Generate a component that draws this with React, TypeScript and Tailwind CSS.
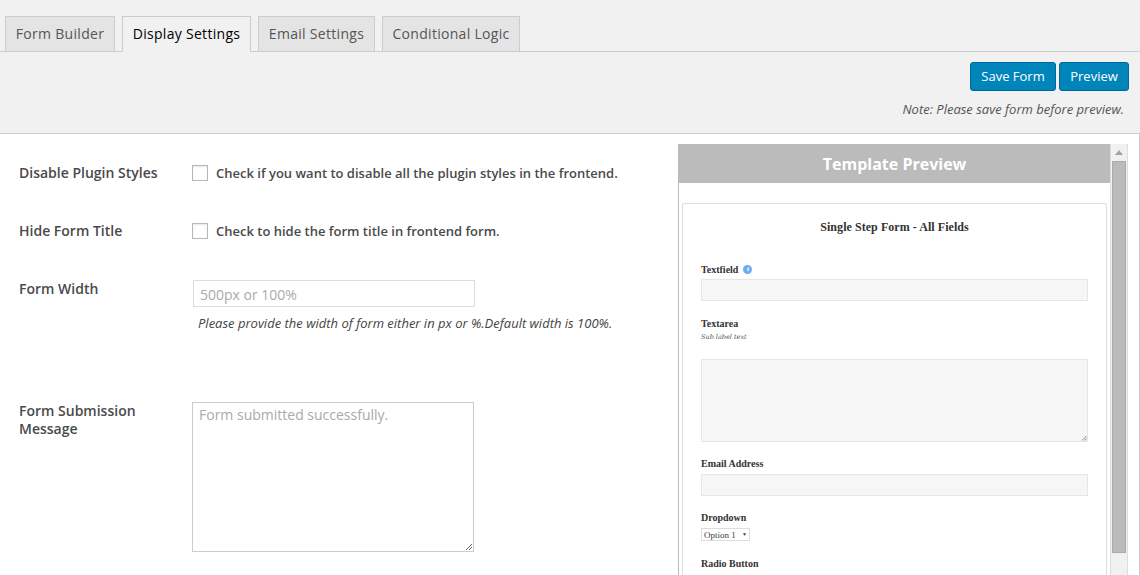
const tabs = [
  { label: 'Form Builder', width: 'w-[110px]', active: false },
  { label: 'Display Settings', width: 'w-[129px]', active: true },
  { label: 'Email Settings', width: 'w-[117px]', active: false },
  { label: 'Conditional Logic', width: 'w-[138px]', active: false },
];

function SettingRow({ label, children, className }: { label: string; children: React.ReactNode; className: string }) {
  return (
    <div className={`flex ${className}`}>
      <div className="w-[173px] shrink-0 text-[14px] leading-[18px] font-semibold text-[#4a4a4a]">{label}</div>
      <div>{children}</div>
    </div>
  );
}

function CheckRow({ label, text, className }: { label: string; text: string; className: string }) {
  return (
    <SettingRow label={label} className={className}>
      <div className="flex items-center h-[18px]">
        <span className="block w-4 h-4 border border-[#b4b9be] bg-white shadow-[inset_0_1px_2px_rgba(0,0,0,0.1)]" />
        <span className="ml-2 pt-px text-[13px] font-semibold text-[#4a4a4a]">{text}</span>
      </div>
    </SettingRow>
  );
}

function PreviewField({ label, className }: { label: string; className: string }) {
  return (
    <div className={className}>
      <div className="text-[10px] leading-[12px] font-bold text-[#333]">{label}</div>
    </div>
  );
}

export default function App() {
  return (
    <div className="w-[1140px] h-[575px] overflow-hidden bg-white font-['Open_Sans',sans-serif]">
      {/* Tabs and actions */}
      <div className="h-[134px] bg-[#f1f1f1] border-b border-[#ccc]">
        <div className="h-[52px] pt-4 pl-[5px] flex gap-[7px] border-b border-[#ccc]">
          {tabs.map((tab) => (
            <div
              key={tab.label}
              className={`${tab.width} h-9 flex items-center justify-center pb-px border border-[#ccc] text-[14px] tracking-[0.3px] ${
                tab.active ? 'bg-[#f1f1f1] border-b-[#f1f1f1] text-black' : 'bg-[#e4e4e4] text-[#555]'
              }`}
            >
              {tab.label}
            </div>
          ))}
        </div>
        <div className="flex justify-end gap-[3px] pt-[10px] pr-[11px]">
          <div className="w-[86px] h-[29px] flex items-center justify-center rounded-[3px] border border-[#006799] bg-[#0085ba] text-white text-[13px]">Save Form</div>
          <div className="w-[70px] h-[29px] flex items-center justify-center rounded-[3px] border border-[#006799] bg-[#0085ba] text-white text-[13px]">Preview</div>
        </div>
        <div className="mt-[9px] pr-4 text-right text-[13px] leading-[18px] italic text-[#555]">Note: Please save form before preview.</div>
      </div>

      <div className="flex h-[441px] border-r border-[#ccc]">
        {/* Settings */}
        <div className="w-[678px] shrink-0 pl-[19px] pt-[30px]">
          <CheckRow label="Disable Plugin Styles" text="Check if you want to disable all the plugin styles in the frontend." className="h-[58px]" />
          <CheckRow label="Hide Form Title" text="Check to hide the form title in frontend form." className="h-[58px]" />
          <SettingRow label="Form Width" className="h-[122px]">
            <div className="ml-px w-[282px] h-[27px] border border-[#ddd] px-[6px] text-[14px] leading-[27px] text-[#aaa]">500px or 100%</div>
            <div className="mt-[7px] ml-[6px] text-[13px] leading-[18px] italic text-[#444]">Please provide the width of form either in px or %.Default width is 100%.</div>
          </SettingRow>
          <SettingRow label="Form Submission Message" className="h-[160px]">
            <div className="relative w-[282px] h-[150px] border border-[#ccc] px-[6px] py-[3px] text-[14px] leading-[18px] text-[#aaa]">
              Form submitted successfully.
              <svg className="absolute right-0 bottom-0" width="9" height="9" viewBox="0 0 9 9">
                <path d="M8 2 2 8M8 5 5 8" stroke="#666" strokeWidth="1" />
              </svg>
            </div>
          </SettingRow>
        </div>

        {/* Template preview */}
        <div className="mt-[10px] w-[451px] h-[431px] flex border-l border-[#bbb]">
          <div className="w-[431px] shrink-0 overflow-hidden">
            <div className="h-[39px] bg-[#bbb] flex items-center justify-center text-[16px] font-bold text-white">Template Preview</div>
            <div className="mt-5 ml-[3px] w-[425px] h-[400px] border border-[#ddd] rounded-[2px] px-[18px] pt-[15px] font-['Liberation_Serif',serif]">
              <div className="text-center text-[12px] leading-[16px] font-bold tracking-[0.05px] text-[#333]">Single Step Form - All Fields</div>
              <div className="mt-[28px] flex items-center gap-[5px] h-3">
                <span className="text-[10px] font-bold text-[#333]">Textfield</span>
                <span className="w-[9px] h-[9px] rounded-full bg-[#6aaef0] text-white text-[7px] leading-[9px] text-center font-bold">i</span>
              </div>
              <div className="mt-[4px] h-[22px] border border-[#e6e6e6] bg-[#f6f6f6]" />
              <PreviewField label="Textarea" className="mt-[17px]" />
              <div className="font-['DejaVu_Serif',serif] text-[6.5px] leading-[14px] italic text-[#555]">Sub label text</div>
              <div className="relative mt-[15px] h-[83px] border border-[#e6e6e6] bg-[#f6f6f6]">
                <svg className="absolute right-0 bottom-0" width="6" height="6" viewBox="0 0 6 6">
                  <path d="M5.5 1 1 5.5M5.5 3.5 3.5 5.5" stroke="#888" strokeWidth="1" />
                </svg>
              </div>
              <PreviewField label="Email Address" className="mt-[16px]" />
              <div className="mt-[4px] h-[22px] border border-[#e6e6e6] bg-[#f6f6f6]" />
              <PreviewField label="Dropdown" className="mt-[16px]" />
              <div className="mt-[4px] w-[49px] h-[13px] flex items-center justify-between border border-[#ddd] px-[2px] text-[9px] leading-[10px] text-[#444]">
                Option 1 <span className="text-[5px]">▼</span>
              </div>
              <PreviewField label="Radio Button" className="mt-[17px]" />
            </div>
          </div>
          {/* Scrollbar */}
          <div className="w-[18px] h-full bg-[#f1f1f1] border-x border-[#ddd] flex flex-col items-center">
            <svg className="mt-[6px] shrink-0" width="8" height="5" viewBox="0 0 8 5">
              <path d="M4 0 8 5H0Z" fill="#a3a3a3" />
            </svg>
            <div className="mt-[6px] w-[14px] h-[392px] bg-[#bbb] border border-[#aaa]" />
          </div>
        </div>
      </div>
    </div>
  );
}
